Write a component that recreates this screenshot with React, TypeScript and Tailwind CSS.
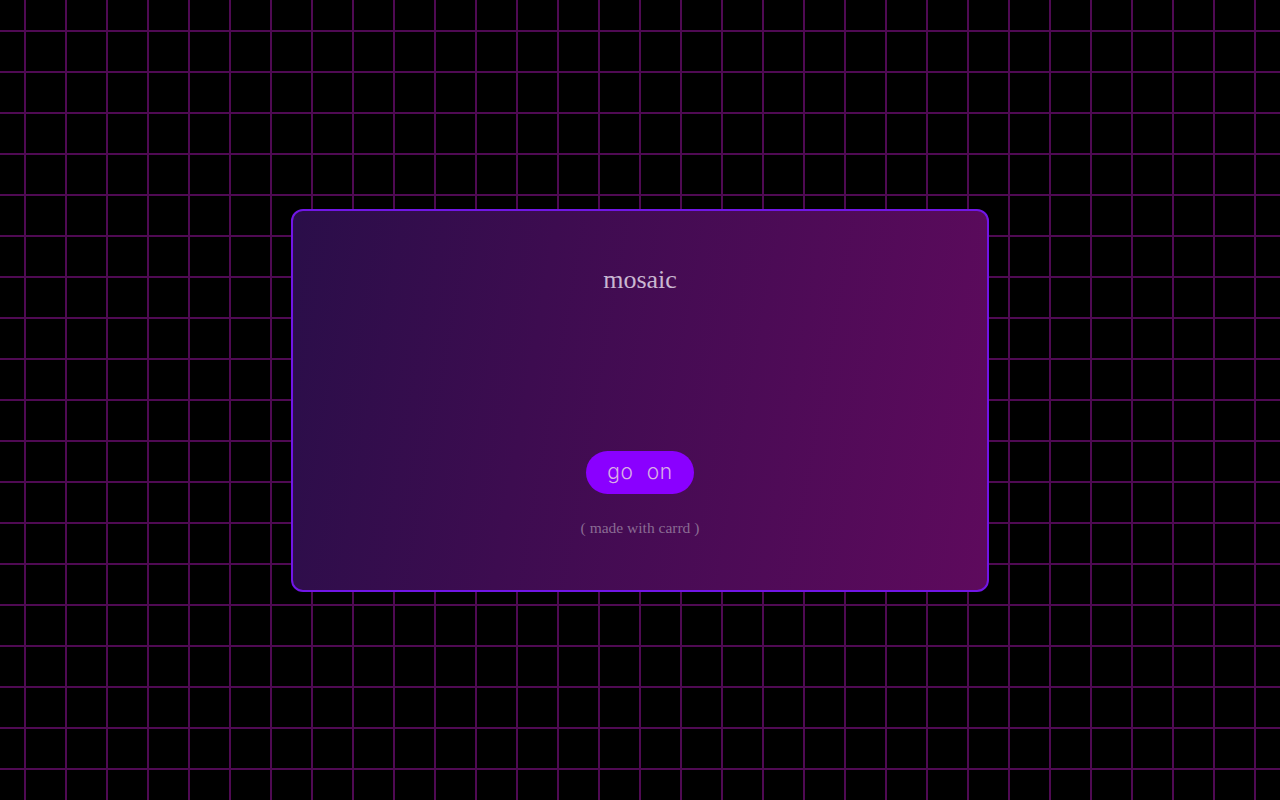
export default function App() {
  return (
    <div className="min-h-screen w-full flex items-center justify-center bg-black bg-[linear-gradient(to_right,#4f0a53_2px,transparent_2px),linear-gradient(to_bottom,#4f0a53_2px,transparent_2px)] bg-[size:41px_41px] bg-[position:24px_30px]">
      <div className="w-[698px] h-[383px] rounded-[12px] border-2 border-[#7116e6] bg-[linear-gradient(100deg,#2a0e49_0%,#3d0c50_35%,#5e0a5d_100%)] flex flex-col items-center pt-[54px]">
        <h1 className="font-['Liberation_Serif',serif] text-[26px] leading-[30px] text-[#c9b7d1]">
          mosaic
        </h1>
        <button className="mt-[156px] w-[108px] h-[43px] rounded-full bg-[#8a00ff] font-['Inter',sans-serif] font-light text-[21px] tracking-[0.03em] text-[#d9aee6] flex items-center justify-center">
          go&nbsp;&nbsp;on
        </button>
        <p className="mt-[24px] font-['Liberation_Serif',serif] text-[15.5px] leading-[20px] text-[#8a6b93]">
          ( made with carrd )
        </p>
      </div>
    </div>
  );
}
